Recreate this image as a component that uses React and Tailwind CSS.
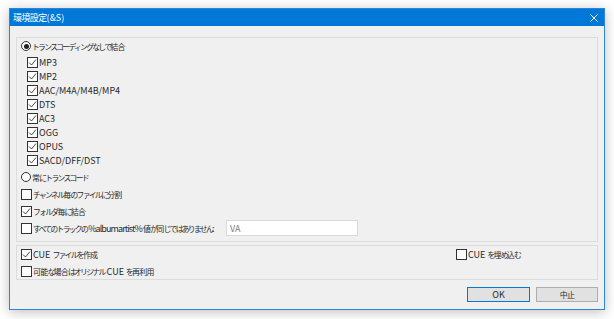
import React from 'react'

const KANA = /^[\u3040-\u30ff]+$/
const KANJI = /^[\u4e00-\u9fff\uff00-\uffef]+$/

function T({ text, title, tight }) {
    const parts = text.split(/([\u3040-\u30ff]+|[\u4e00-\u9fff\uff00-\uffef]+)/)
    return parts.map((p, i) => {
        if (KANA.test(p)) return <span key={i} className="text-[7.8px] tracking-[-1.7px]">{p}</span>
        if (KANJI.test(p)) return <span key={i} className={title ? 'text-[9px] tracking-[-0.6px]' : 'text-[8px] tracking-[-0.8px]'}>{p}</span>
        return <span key={i} className={tight ? 'tracking-[-0.9px]' : ''}>{p}</span>
    })
}

function Check({ checked }) {
    return (
        <span className="w-[11px] h-[11px] border border-[#333333] bg-white flex items-center justify-center shrink-0">
            {checked && (
                <svg width="9" height="9" viewBox="0 0 9 9">
                    <path d="M1 4.5 L3.5 7 L8 1.5" fill="none" stroke="#333" strokeWidth="0.9" />
                </svg>
            )}
        </span>
    )
}

function Radio({ on }) {
    return (
        <span className="w-[10px] h-[10px] rounded-full border border-[#333333] bg-white flex items-center justify-center shrink-0">
            {on && <span className="w-[5px] h-[5px] rounded-full bg-[#222]" />}
        </span>
    )
}

function CheckRow({ label, checked, tight, className = '' }) {
    return (
        <div className={`h-[14px] flex items-center gap-[1px] ${className}`}>
            <Check checked={checked} />
            <span className="whitespace-nowrap"><T text={label} tight={tight} /></span>
        </div>
    )
}

function RadioRow({ label, on, className = '' }) {
    return (
        <div className={`h-[14px] flex items-center gap-[1px] ${className}`}>
            <Radio on={on} />
            <span className="whitespace-nowrap"><T text={label} /></span>
        </div>
    )
}

const formats = ['MP3', 'MP2', 'AAC/M4A/M4B/MP4', 'DTS', 'AC3', 'OGG', 'OPUS', 'SACD/DFF/DST']

export default function App() {
    return (
        <div className="w-[614px] h-[319px] bg-white pl-[9px] pt-[8px] font-['Noto_Sans_CJK_JP',sans-serif] text-[9px] text-[#2a2a2a] leading-none">
            <div className="w-[596px] h-[302px] border border-[#2f84d8] bg-[#f0f0f0] flex flex-col shadow-[0_2px_12px_rgba(0,0,0,0.25)]">
                {/* title bar */}
                <div className="h-[17px] bg-[#0078d7] flex items-center justify-between pl-[3px] pr-[6px] text-white">
                    <span><T text="環境設定(&S)" title /></span>
                    <svg width="8" height="8" viewBox="0 0 8 8">
                        <path d="M0.5 0.5 L7.5 7.5 M7.5 0.5 L0.5 7.5" stroke="#fff" strokeWidth="1" />
                    </svg>
                </div>

                <div className="flex-1 flex flex-col px-[6px] pt-[11px]">
                    {/* group 1 */}
                    <div className="h-[205px] border border-[#dcdcdc] flex flex-col pl-[4px] pt-[1px]">
                        <RadioRow label="トランスコーディングなしで結合" on />
                        <div className="flex flex-col pl-[6px] mt-[2px]">
                            {formats.map(f => <CheckRow key={f} label={f} checked />)}
                        </div>
                        <RadioRow label="常にトランスコード" className="mt-[3px]" />
                        <CheckRow label="チャンネル毎のファイルに分割" className="mt-[3px]" />
                        <CheckRow label="フォルダ毎に結合" checked className="mt-[3px]" />
                        <div className="flex items-center mt-[2px] h-[16px]">
                            <CheckRow label="すべてのトラックの %albumartist% 値が同じではありません:" tight className="w-[205px] shrink-0" />
                            <div className="w-[132px] h-[16px] border border-[#d9d9d9] bg-white flex items-center pl-[3px] text-[#7a7a7a]">VA</div>
                        </div>
                    </div>

                    {/* group 2 */}
                    <div className="h-[35px] mt-[3px] border border-[#dcdcdc] flex flex-col pl-[4px] pt-[1px]">
                        <div className="flex">
                            <CheckRow label="CUE ファイルを作成" checked className="w-[435px]" />
                            <CheckRow label="CUE を埋め込む" />
                        </div>
                        <CheckRow label="可能な場合はオリジナル CUE を再利用" className="mt-[3px]" />
                    </div>

                    {/* buttons */}
                    <div className="flex justify-end gap-[6px] mt-[7px]">
                        <button className="w-[63px] h-[15px] border border-[#0078d7] bg-[#e1e1e1]">OK</button>
                        <button className="w-[62px] h-[15px] border border-[#adadad] bg-[#e1e1e1]"><T text="中止" /></button>
                    </div>
                </div>
            </div>
        </div>
    )
}
